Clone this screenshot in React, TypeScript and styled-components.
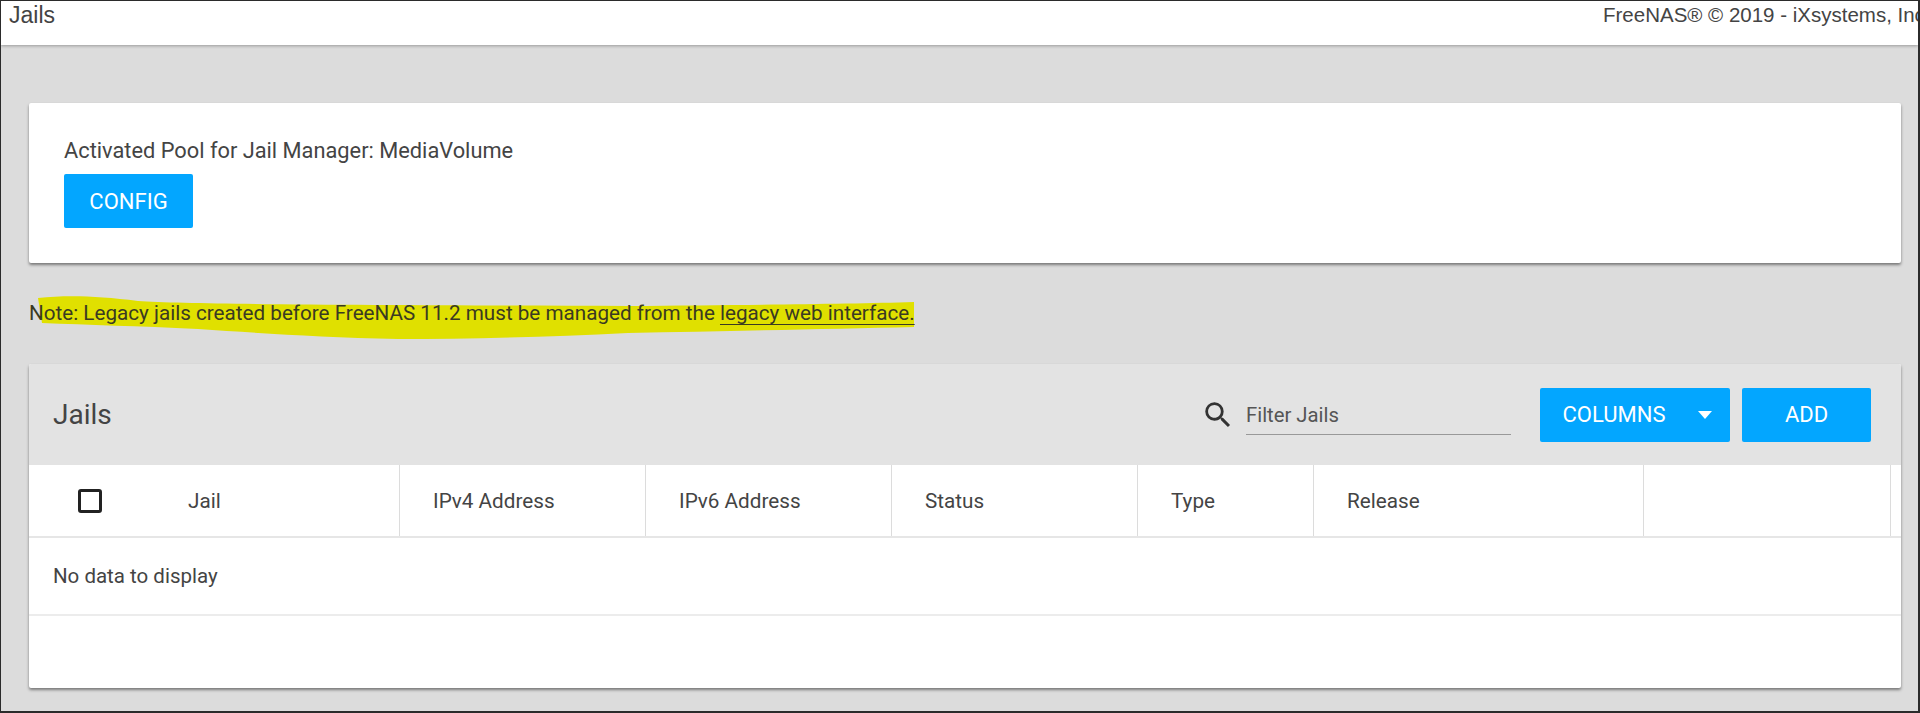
import styled, { createGlobalStyle } from "styled-components";

const GlobalStyle = createGlobalStyle`
  html, body {
    margin: 0;
    padding: 0;
    background: #dcdcdc;
  }
  * {
    box-sizing: border-box;
  }
`;

const Page = styled.div`
  width: 1920px;
  height: 713px;
  overflow: hidden;
  background: #dcdcdc;
  border: 1px solid #2b2b2b;
  border-right-width: 2px;
  border-bottom-width: 2px;
  font-family: Roboto, "Liberation Sans", sans-serif;
  color: #444;
`;

const TopBar = styled.header`
  height: 44px;
  background: #fff;
  box-shadow: 0 1px 3px rgba(0, 0, 0, 0.3);
  display: flex;
  justify-content: space-between;
  padding-left: 8px;
  font-family: "Liberation Sans", Arial, sans-serif;
  font-size: 20.5px;
  line-height: 28px;
  white-space: nowrap;
`;

const BrandTitle = styled.span`
  font-size: 23px;
`;

const Copyright = styled.div`
  flex: none;
  width: 315px;
  overflow: hidden;
`;

const Content = styled.main`
  padding: 58px 17px 0 28px;
`;

const PoolCard = styled.section`
  height: 160px;
  background: #fff;
  border-radius: 2px;
  box-shadow: 0 2px 3px rgba(0, 0, 0, 0.45);
  padding: 36px 35px;
`;

const PoolLabel = styled.div`
  font-size: 21.8px;
  line-height: 24px;
  margin-bottom: 11px;
`;

const Button = styled.button<{ $width: number }>`
  display: flex;
  align-items: center;
  justify-content: center;
  width: ${(p) => p.$width}px;
  height: 54px;
  padding: 0;
  border: 0;
  border-radius: 2px;
  background: #03a6ff;
  color: #fff;
  font-family: inherit;
  font-size: 22px;
`;

const Note = styled.p`
  position: relative;
  margin: 37px 0 38px;
  font-size: 20.66px;
  line-height: 26px;
  height: 26px;
  color: #3a3a22;
`;

const NoteText = styled.span`
  position: relative;
`;

const Highlight = styled.svg`
  position: absolute;
  left: -1px;
  top: -7px;
`;

const NoteLink = styled.a`
  color: inherit;
  text-decoration: underline;
  text-decoration-thickness: 1px;
  text-underline-offset: 4px;
`;

const TableCard = styled.section`
  height: 324px;
  background: #fff;
  border-radius: 2px;
  box-shadow: 0 2px 3px rgba(0, 0, 0, 0.45);
  overflow: hidden;
`;

const TableToolbar = styled.div`
  height: 101px;
  background: #e3e3e3;
  display: flex;
  align-items: center;
  padding: 0 30px 0 24px;
`;

const TableTitle = styled.h2`
  margin: 0 auto 0 0;
  font-size: 28px;
  font-weight: 400;
`;

const Filter = styled.div`
  display: flex;
  align-items: center;
  gap: 11px;
  margin-right: 29px;
`;

const FilterInput = styled.div`
  width: 265px;
  height: 41px;
  border-bottom: 1px solid #999;
  font-size: 20.3px;
  line-height: 42px;
  color: #555;
`;

const ToolbarButton = styled(Button)`
  & + & {
    margin-left: 12px;
  }
`;

const ColumnsButton = styled(ToolbarButton)`
  padding-left: 5px;
`;

const Caret = styled.span`
  width: 0;
  height: 0;
  margin-left: 33px;
  border-left: 7px solid transparent;
  border-right: 7px solid transparent;
  border-top: 8px solid #fff;
`;

const HeaderRow = styled.div`
  height: 73px;
  display: grid;
  grid-template-columns: 371px 246px 246px 246px 176px 330px 247px 1fr;
  border-bottom: 2px solid #e6e6e6;
`;

const HeaderCell = styled.div<{ $first?: boolean }>`
  display: flex;
  align-items: center;
  padding-left: ${(p) => (p.$first ? 49 : 33)}px;
  font-size: 20.7px;
  border-right: 1px solid #dcdcdc;
`;

const CheckBox = styled.span`
  width: 24px;
  height: 24px;
  margin-right: 86px;
  border: 3px solid #222;
  border-radius: 3px;
`;

const EmptyRow = styled.div`
  height: 78px;
  display: flex;
  align-items: center;
  padding-left: 24px;
  font-size: 20.5px;
  border-bottom: 2px solid #ececec;
`;

export default function App() {
  const columns = ["IPv4 Address", "IPv6 Address", "Status", "Type", "Release", ""];

  return (
    <>
      <GlobalStyle />
      <Page>
        <TopBar>
          <BrandTitle>Jails</BrandTitle>
          <Copyright>FreeNAS® © 2019 - iXsystems, Inc</Copyright>
        </TopBar>
        <Content>
          <PoolCard>
            <PoolLabel>Activated Pool for Jail Manager: MediaVolume</PoolLabel>
            <Button $width={129}>CONFIG</Button>
          </PoolCard>
          <Note>
            <Highlight width="900" height="50" viewBox="0 0 900 50">
              <path
                d="M10 5 C40 2 70 3 110 8 C170 12 400 12 600 13 C720 12 820 11 886 9 L886 34 C800 36 700 38 600 40 C520 44 440 46 370 46 C290 44 230 40 170 36 C110 33 60 32 14 30 Z"
                fill="#e0e000"
              />
            </Highlight>
            <NoteText>
              Note: Legacy jails created before FreeNAS 11.2 must be managed from the{" "}
              <NoteLink href="#">legacy web interface.</NoteLink>
            </NoteText>
          </Note>
          <TableCard>
            <TableToolbar>
              <TableTitle>Jails</TableTitle>
              <Filter>
                <svg width="34" height="34" viewBox="0 0 24 24" fill="#333">
                  <path d="M15.5 14h-.79l-.28-.27A6.47 6.47 0 0 0 16 9.5 6.5 6.5 0 1 0 9.5 16c1.61 0 3.09-.59 4.23-1.57l.27.28v.79l5 4.99L20.49 19l-4.99-5zm-6 0C7.01 14 5 11.99 5 9.5S7.01 5 9.5 5 14 7.01 14 9.5 11.99 14 9.5 14z" />
                </svg>
                <FilterInput>Filter Jails</FilterInput>
              </Filter>
              <ColumnsButton $width={190}>
                COLUMNS
                <Caret />
              </ColumnsButton>
              <ToolbarButton $width={129}>ADD</ToolbarButton>
            </TableToolbar>
            <HeaderRow>
              <HeaderCell $first>
                <CheckBox />
                Jail
              </HeaderCell>
              {columns.map((name, i) => (
                <HeaderCell key={i}>{name}</HeaderCell>
              ))}
            </HeaderRow>
            <EmptyRow>No data to display</EmptyRow>
          </TableCard>
        </Content>
      </Page>
    </>
  );
}
